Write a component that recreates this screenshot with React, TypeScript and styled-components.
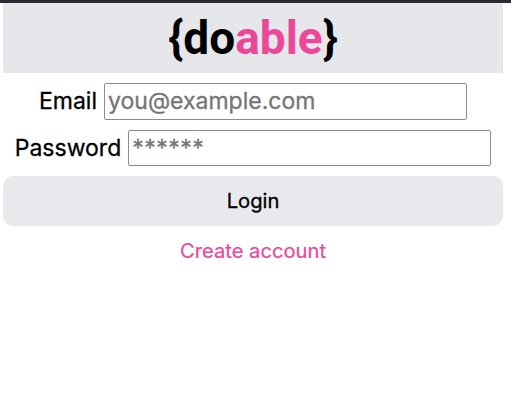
import React from "react";
import styled, { createGlobalStyle } from "styled-components";

const Global = createGlobalStyle`
  * { box-sizing: border-box; }
  body { margin: 0; background: #fff; color: #000; font-family: Inter, sans-serif; }
`;

const Page = styled.main`
  border-top: 3px solid #1c1b1f;
  border-image: linear-gradient(#2b2a30 0 67%, #111114 67%) 3;
  height: 413px;
  padding: 0 8px 0 3px;
  display: flex;
  flex-direction: column;
`;

const Header = styled.header`
  height: 70px;
  background: #e5e7eb;
  display: flex;
  justify-content: center;
  align-items: center;
`;

const Logo = styled.h1`
  margin: 0;
  font: 700 46px/70px Roboto, sans-serif;
`;

const Accent = styled.span`
  color: #ec4899;
`;

const Form = styled.form`
  display: flex;
  flex-direction: column;
  gap: 10px;
  padding-top: 10px;
`;

const Field = styled.label<{ $height: number }>`
  display: flex;
  justify-content: center;
  gap: 7px;
  height: ${({ $height }) => $height}px;
  font-size: 23px;
  line-height: 36px;
  -webkit-text-stroke: 0.3px;
`;

const Input = styled.input`
  width: 363px;
  height: 100%;
  padding: 0 3px 1px;
  border: 1px solid #8b8b91;
  border-radius: 2px;
  font: 400 23px Inter, sans-serif;
  -webkit-text-stroke: 0.3px;
  &::placeholder { color: #757575; opacity: 1; }
  &[type="password"]::placeholder { letter-spacing: 0.5px; }
`;

const Submit = styled.button`
  height: 50px;
  padding: 0 6px 2px;
  border: 0;
  border-radius: 10px;
  background: #e9e9ed;
  color: #000;
  font: 400 20.2px/25px Inter, sans-serif;
  -webkit-text-stroke: 0.3px;
`;

const CreateLink = styled.a`
  align-self: center;
  margin-top: 13px;
  color: #ec4899;
  font-size: 20.2px;
  line-height: 24px;
  -webkit-text-stroke: 0.2px;
`;

export default function App() {
  return (
    <Page>
      <Global />
      <Header>
        <Logo>{"{do"}<Accent>able</Accent>{"}"}</Logo>
      </Header>
      <Form>
        <Field $height={37}>Email<Input type="text" placeholder="you@example.com" /></Field>
        <Field $height={36}>Password<Input type="password" placeholder="******" /></Field>
        <Submit type="button">Login</Submit>
      </Form>
      <CreateLink>Create account</CreateLink>
    </Page>
  );
}
